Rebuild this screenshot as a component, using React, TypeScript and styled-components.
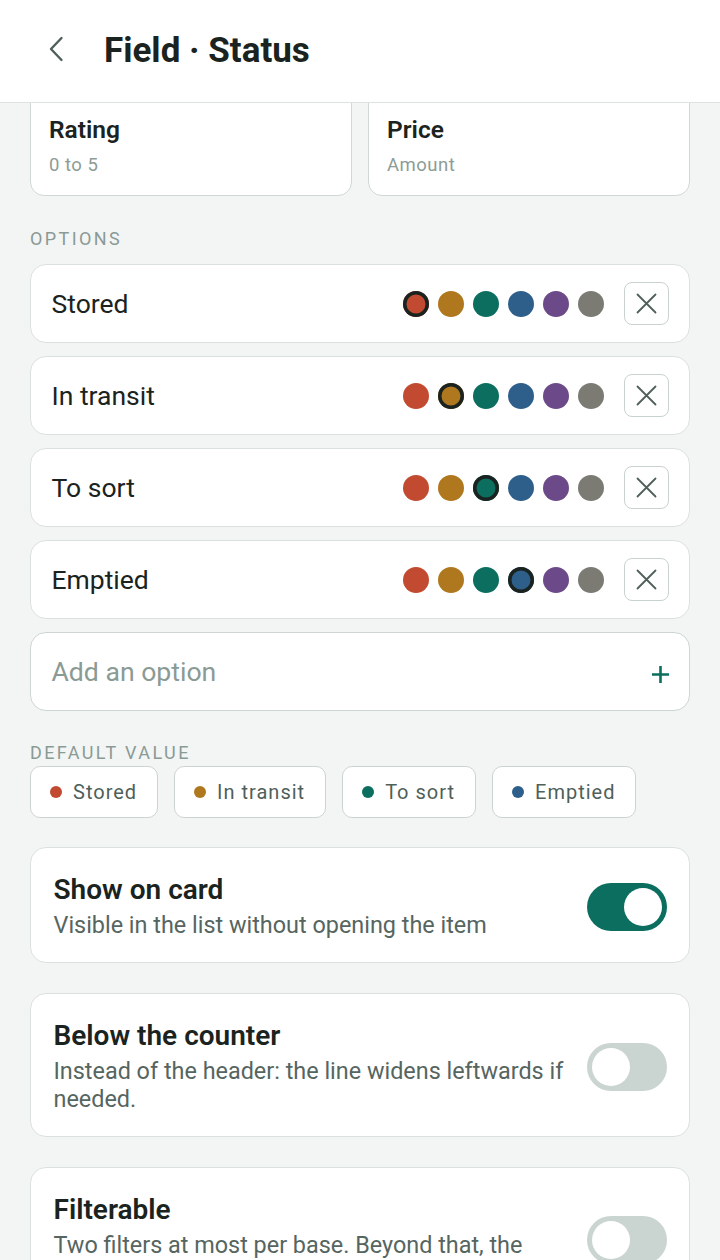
import { FunctionComponent } from "react";
import styled, { createGlobalStyle } from "styled-components";

const GlobalStyle = createGlobalStyle`
  html, body {
    margin: 0;
    padding: 0;
    background: #f3f5f4;
  }
  body {
    font-family: Roboto, "Noto Sans", "Liberation Sans", sans-serif;
    color: #1b2320;
  }
  * {
    box-sizing: border-box;
  }
`;

const Screen = styled.div`
  width: 720px;
  height: 1260px;
  overflow: hidden;
  background: #f3f5f4;
`;

// the page is scrolled a little: the header lies over the top of the type cards
const Header = styled.header`
  position: relative;
  z-index: 2;
  height: 103px;
  background: #ffffff;
  border-bottom: 1px solid #dde2e0;
  display: flex;
  align-items: center;
  padding: 0 0 0 43px;
  gap: 35px;
`;

const BackButton = styled.button`
  border: 0;
  background: none;
  padding: 0;
  width: 26px;
  height: 30px;
  display: flex;
  align-items: center;
  justify-content: center;
  color: #4f5f59;
  margin-top: -4px;
`;

const Title = styled.h1`
  margin: 0;
  font-size: 35px;
  line-height: 40px;
  font-weight: 700;
  color: #1b2320;
`;

const Content = styled.main`
  margin-top: -20px;
  padding: 0 30px;
  display: flex;
  flex-direction: column;
`;

const TypeGrid = styled.div`
  display: grid;
  grid-template-columns: 1fr 1fr;
  gap: 16px;
`;

const TypeCard = styled.div`
  background: #ffffff;
  border: 1.5px solid #cfd8d4;
  border-radius: 14px;
  height: 113px;
  padding: 32px 18px 0;
  display: flex;
  flex-direction: column;
  gap: 10px;
`;

const TypeName = styled.div`
  font-size: 24.5px;
  line-height: 28px;
  font-weight: 600;
  color: #1b2320;
`;

const TypeHint = styled.div`
  font-size: 18.5px;
  line-height: 22px;
  color: #8d9c96;
  letter-spacing: 0.5px;
`;

const SectionLabel = styled.div<{ $top: number }>`
  margin-top: ${(p) => p.$top}px;
  font-size: 18px;
  line-height: 20px;
  letter-spacing: 2.4px;
  text-transform: uppercase;
  color: #8a9a94;
`;

const OptionList = styled.div`
  margin-top: 15px;
  display: flex;
  flex-direction: column;
  gap: 13px;
`;

const OptionRow = styled.div`
  height: 79px;
  background: #ffffff;
  border: 1.5px solid #dbe1de;
  border-radius: 16px;
  display: flex;
  align-items: center;
  padding: 0 20.5px 0 20.5px;
`;

const OptionName = styled.div`
  flex: 1;
  font-size: 26.5px;
  color: #1b2320;
`;

const Swatches = styled.div`
  display: flex;
  gap: 9px;
  margin-right: 20px;
`;

const Swatch = styled.span<{ $color: string; $active: boolean }>`
  width: 26px;
  height: 26px;
  border-radius: 50%;
  background: ${(p) => p.$color};
  box-shadow: ${(p) => (p.$active ? "0 0 0 3.5px #1b2320 inset" : "none")};
`;

const RemoveButton = styled.button`
  width: 45px;
  height: 43px;
  border: 1.5px solid #c8d2ce;
  border-radius: 8px;
  background: #ffffff;
  display: flex;
  align-items: center;
  justify-content: center;
  padding: 0;
  color: #4f5f59;
`;

const AddRow = styled(OptionRow)`
  border-color: #cdd6d2;
  padding-right: 20.5px;
`;

const AddPlaceholder = styled.div`
  flex: 1;
  font-size: 26.6px;
  color: #8a9a94;
`;

const AddIcon = styled.span`
  display: flex;
  margin-top: 6px;
`;

const Chips = styled.div`
  margin-top: 3px;
  display: flex;
  gap: 16px;
`;

const Chip = styled.div`
  height: 52px;
  padding: 0 20px 0 19px;
  background: #ffffff;
  border: 1.5px solid #cbd4d0;
  border-radius: 10px;
  display: flex;
  align-items: center;
  gap: 11px;
  font-size: 20px;
  letter-spacing: 1px;
  color: #4f5f59;
`;

const ChipDot = styled.span<{ $color: string }>`
  width: 12px;
  height: 12px;
  border-radius: 50%;
  background: ${(p) => p.$color};
`;

const Settings = styled.div`
  margin-top: 29px;
  display: flex;
  flex-direction: column;
  gap: 30px;
`;

const SettingCard = styled.div`
  background: #ffffff;
  border: 1.5px solid #dbe1de;
  border-radius: 16px;
  padding: 26px 22.5px 22.5px 22.5px;
  display: flex;
  align-items: center;
  gap: 16px;
`;

const SettingText = styled.div`
  flex: 1;
  display: flex;
  flex-direction: column;
  gap: 6px;
`;

const SettingTitle = styled.div`
  font-size: 28px;
  font-weight: 600;
  color: #1b2320;
  line-height: 32px;
`;

const SettingDesc = styled.div`
  font-size: 23.4px;
  color: #56655f;
  line-height: 27.5px;
`;

const Toggle = styled.div<{ $on: boolean }>`
  flex: none;
  width: 80px;
  height: 48px;
  border-radius: 24px;
  padding: 5px;
  background: ${(p) => (p.$on ? "#0b6e5f" : "#cad4d0")};
  display: flex;
  justify-content: ${(p) => (p.$on ? "flex-end" : "flex-start")};
`;

const Knob = styled.span`
  width: 38px;
  height: 38px;
  border-radius: 50%;
  background: #ffffff;
`;

const COLORS = ["#c24a31", "#b0781e", "#0b6e5f", "#2d5f8a", "#6c4a8a", "#7b7b73"];

const options = [
  { name: "Stored", color: 0 },
  { name: "In transit", color: 1 },
  { name: "To sort", color: 2 },
  { name: "Emptied", color: 3 },
];

const settings = [
  { title: "Show on card", desc: "Visible in the list without opening the item", on: true },
  {
    title: "Below the counter",
    desc: "Instead of the header: the line widens leftwards if needed.",
    on: false,
  },
  {
    title: "Filterable",
    desc: "Two filters at most per base. Beyond that, the oldest one is replaced.",
    on: false,
  },
];

const ChevronLeft = () => (
  <svg width="18" height="26" viewBox="0 0 18 26" fill="none">
    <path d="M14.5 2 L4 13 L14.5 24" stroke="currentColor" strokeWidth="2.4" strokeLinecap="round" strokeLinejoin="round" />
  </svg>
);

const CrossIcon = () => (
  <svg width="21" height="21" viewBox="0 0 21 21" fill="none">
    <path d="M1.5 1.5 L19.5 19.5 M19.5 1.5 L1.5 19.5" stroke="currentColor" strokeWidth="1.8" strokeLinecap="round" />
  </svg>
);

const PlusIcon = () => (
  <svg width="17" height="17" viewBox="0 0 17 17" fill="none">
    <path d="M8.5 0 V17 M0 8.5 H17" stroke="#0b6e5f" strokeWidth="2.6" />
  </svg>
);

const App: FunctionComponent = () => {
  return (
    <Screen>
      <GlobalStyle />
      <Header>
        <BackButton aria-label="Back">
          <ChevronLeft />
        </BackButton>
        <Title>Field · Status</Title>
      </Header>
      <Content>
        <TypeGrid>
          <TypeCard>
            <TypeName>Rating</TypeName>
            <TypeHint>0 to 5</TypeHint>
          </TypeCard>
          <TypeCard>
            <TypeName>Price</TypeName>
            <TypeHint>Amount</TypeHint>
          </TypeCard>
        </TypeGrid>

        <SectionLabel $top={33}>Options</SectionLabel>
        <OptionList>
          {options.map((o) => (
            <OptionRow key={o.name}>
              <OptionName>{o.name}</OptionName>
              <Swatches>
                {COLORS.map((c, i) => (
                  <Swatch key={c} $color={c} $active={i === o.color} />
                ))}
              </Swatches>
              <RemoveButton aria-label="Remove">
                <CrossIcon />
              </RemoveButton>
            </OptionRow>
          ))}
          <AddRow>
            <AddPlaceholder>Add an option</AddPlaceholder>
            <AddIcon>
              <PlusIcon />
            </AddIcon>
          </AddRow>
        </OptionList>

        <SectionLabel $top={32}>Default value</SectionLabel>
        <Chips>
          {options.map((o) => (
            <Chip key={o.name}>
              <ChipDot $color={COLORS[o.color]} />
              {o.name}
            </Chip>
          ))}
        </Chips>

        <Settings>
          {settings.map((s) => (
            <SettingCard key={s.title}>
              <SettingText>
                <SettingTitle>{s.title}</SettingTitle>
                <SettingDesc>{s.desc}</SettingDesc>
              </SettingText>
              <Toggle $on={s.on}>
                <Knob />
              </Toggle>
            </SettingCard>
          ))}
        </Settings>
      </Content>
    </Screen>
  );
};

export default App;
